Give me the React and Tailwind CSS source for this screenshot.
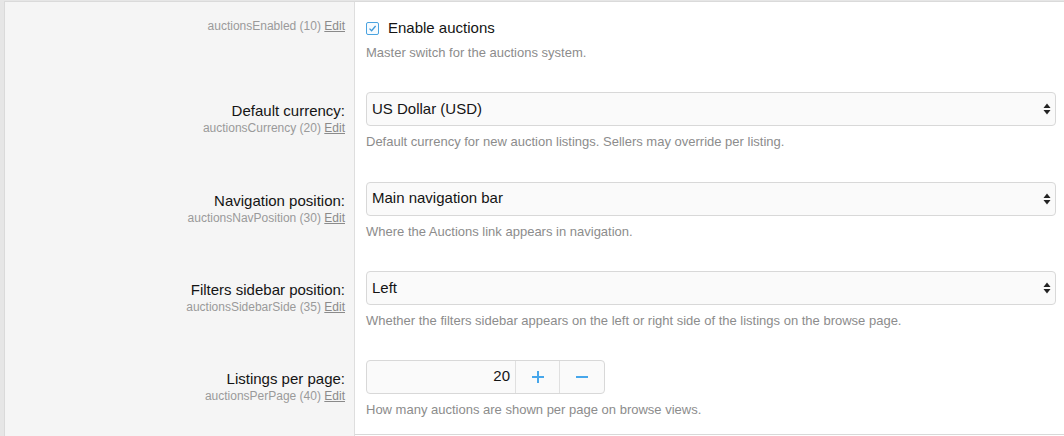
import React from 'react';

const FONT = { fontFamily: '"Liberation Sans", Arial, sans-serif' };

const rows = [
    {
        label: 'Default currency:',
        hint: 'auctionsCurrency (20)',
        value: 'US Dollar (USD)',
        explain: 'Default currency for new auction listings. Sellers may override per listing.',
    },
    {
        label: 'Navigation position:',
        hint: 'auctionsNavPosition (30)',
        value: 'Main navigation bar',
        explain: 'Where the Auctions link appears in navigation.',
    },
    {
        label: 'Filters sidebar position:',
        hint: 'auctionsSidebarSide (35)',
        value: 'Left',
        explain: 'Whether the filters sidebar appears on the left or right side of the listings on the browse page.',
    },
];

const Hint = ({ text }) => (
    <div className="text-[12px] leading-[16px] text-[#9a9a9a]">
        {text} <span className="underline text-[#8a8a8a]">Edit</span>
    </div>
);

const Explain = ({ children, className = 'mt-[7px]' }) => (
    <div className={`text-[13px] leading-[18px] text-[#8c8c8c] ${className}`}>{children}</div>
);

const SelectArrows = () => (
    <svg width="8" height="12" viewBox="0 0 8 12" className="text-[#222]">
        <path d="M4 0.5 L7.5 5 L0.5 5 Z" fill="currentColor" />
        <path d="M4 11.5 L7.5 7 L0.5 7 Z" fill="currentColor" />
    </svg>
);

const Row = ({ left, children, leftPad = 'pt-[25px]', rightPad = 'pt-[15px] pb-[15.5px]' }) => (
    <div className="flex">
        <div className={`w-[350px] shrink-0 bg-[#f5f5f5] border-r border-[#dedede] pr-[9px] text-right ${leftPad}`}>
            {left}
        </div>
        <div className={`flex-1 pl-[11px] pr-[8px] ${rightPad}`}>{children}</div>
    </div>
);

const Label = ({ label, hint }) => (
    <>
        <div className="text-[15px] leading-[18px] text-[#141414]">{label}</div>
        <Hint text={hint} />
    </>
);

export default function App() {
    return (
        <div className="w-[1064px] h-[436px] overflow-hidden bg-[#e6e6e6] pl-[4px] pt-[1px]" style={FONT}>
            <div className="border-l border-t border-[#dadada] bg-white h-full flex flex-col">
                {/* checkbox row */}
                <Row left={<Hint text="auctionsEnabled (10)" />} leftPad="pt-[16px]" rightPad="pt-[16px] pb-[15px]">
                    <label className="flex items-center gap-[9px] h-[20px]">
                        <span className="w-[13px] h-[13px] border border-[#4aa3e0] rounded-[2px] bg-[#f6fbff] flex items-center justify-center">
                            <svg width="9" height="9" viewBox="0 0 9 9">
                                <path d="M1.5 4.6 L3.6 6.7 L7.6 2" fill="none" stroke="#3d98d8" strokeWidth="1.3" />
                            </svg>
                        </span>
                        <span className="text-[15px] text-[#141414]">Enable auctions</span>
                    </label>
                    <Explain className="mt-[6px]">Master switch for the auctions system.</Explain>
                </Row>

                {rows.map(r => (
                    <Row key={r.hint} left={<Label label={r.label} hint={r.hint} />}>
                        <div className="h-[34px] border border-[#d8d8d8] rounded-[4px] bg-[#fafafa] flex items-center justify-between pl-[5px] pr-[4px]">
                            <span className="text-[15px] text-[#141414]">{r.value}</span>
                            <SelectArrows />
                        </div>
                        <Explain>{r.explain}</Explain>
                    </Row>
                ))}

                {/* number row */}
                <Row
                    left={<Label label="Listings per page:" hint="auctionsPerPage (40)" />}
                    leftPad="pt-[24px]"
                    rightPad="pt-[14px] pb-[15px]"
                >
                    <div className="w-[239px] h-[34px] border border-[#d8d8d8] rounded-[4px] bg-[#fafafa] flex">
                        <div className="w-[148px] flex items-center justify-end pr-[5px] text-[15px] text-[#141414]">20</div>
                        <div className="w-[44px] border-l border-[#e0e0e0] flex items-center justify-center">
                            <svg width="14" height="14" viewBox="0 0 14 14">
                                <path d="M7 1 V13 M1 7 H13" stroke="#47a7eb" strokeWidth="2" />
                            </svg>
                        </div>
                        <div className="flex-1 border-l border-[#e0e0e0] flex items-center justify-center">
                            <svg width="14" height="14" viewBox="0 0 14 14">
                                <path d="M1 7 H13" stroke="#47a7eb" strokeWidth="2" />
                            </svg>
                        </div>
                    </div>
                    <Explain>How many auctions are shown per page on browse views.</Explain>
                </Row>

                <div className="flex flex-1">
                    <div className="w-[350px] shrink-0 bg-[#f5f5f5] border-r border-[#dedede]" />
                    <div className="flex-1 border-t border-[#d8d8d8]" />
                </div>
            </div>
        </div>
    );
}
